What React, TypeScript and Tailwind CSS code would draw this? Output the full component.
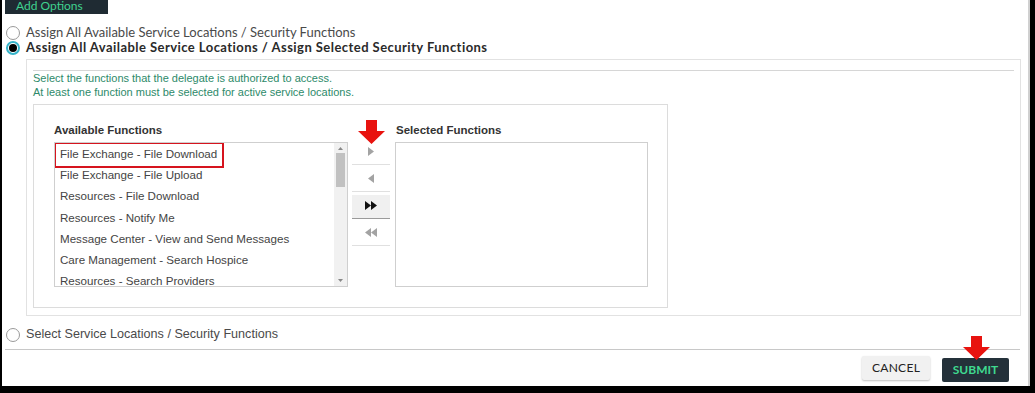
import React from 'react';

const available = [
  'File Exchange - File Download',
  'File Exchange - File Upload',
  'Resources - File Download',
  'Resources - Notify Me',
  'Message Center - View and Send Messages',
  'Care Management - Search Hospice',
  'Resources - Search Providers',
];

function Radio({ checked }: { checked?: boolean }) {
  if (checked) {
    return (
      <span className="w-[14px] h-[14px] rounded-full border-2 border-[#35b3c9] flex items-center justify-center shrink-0">
        <span className="w-[8px] h-[8px] rounded-full bg-black" />
      </span>
    );
  }
  return <span className="w-[14px] h-[14px] rounded-full border border-[#9a9a9a] bg-white shrink-0" />;
}

function RedArrow({ className }: { className: string }) {
  return (
    <svg className={className} width="27" height="24" viewBox="0 0 27 24">
      <polygon points="8,0 19,0 19,11 27,11 13.5,24 0,11 8,11" fill="#e8130f" />
    </svg>
  );
}

function Tri({ dir, color, double }: { dir: 'r' | 'l'; color: string; double?: boolean }) {
  const one = dir === 'r' ? '0,0 6,4.5 0,9' : '6,0 0,4.5 6,9';
  return (
    <svg width={double ? 12 : 6} height="9" viewBox={double ? '0 0 12 9' : '0 0 6 9'}>
      <polygon points={one} fill={color} />
      {double && <polygon points={one} fill={color} transform="translate(6,0)" />}
    </svg>
  );
}

export default function App() {
  return (
    <div className="w-[1035px] h-[393px] overflow-hidden bg-white border-l-2 border-r-[5px] border-b-[7px] border-black font-['Lato',sans-serif]">
      <div className="h-full border-r-2 border-[#d0d0d0] flex flex-col">
        {/* header button */}
        <div className="ml-[3px] w-[103px] h-[14px] bg-[#1f2b33] overflow-hidden flex items-end pb-[2px] pl-[11px]">
          <span className="text-[12px] leading-[12px] text-[#3fd28f]">Add Options</span>
        </div>

        {/* radio options */}
        <div className="mt-[11px] ml-[4px] h-[15px] flex items-center gap-[6px]">
          <Radio />
          <span className="text-[13px] leading-none text-[#4a4a4a]">Assign All Available Service Locations / Security Functions</span>
        </div>
        <div className="ml-[4px] h-[15px] flex items-center gap-[6px]">
          <Radio checked />
          <span className="text-[13px] leading-none font-bold tracking-[0.45px] text-[#2a2a2a]">Assign All Available Service Locations / Assign Selected Security Functions</span>
        </div>

        {/* function panel */}
        <div className="mt-[4px] ml-[24px] w-[995px] h-[257px] border border-[#e2e2e2] pt-[10px] px-[6px] font-['Liberation_Sans',Arial,sans-serif]">
          <div className="border-t border-[#d6d6d6]" />
          <div className="text-[11px] leading-[14px] text-[#2d8a6a]">
            <p>Select the functions that the delegate is authorized to access.</p>
            <p>At least one function must be selected for active service locations.</p>
          </div>

          <div className="mt-[5px] w-[635px] h-[204px] border border-[#dcdcdc] pt-[19px] pl-[20px] flex">
            <div className="w-[294px]">
              <div className="h-[18px] text-[11.5px] font-bold leading-[13px] text-[#333]">Available Functions</div>
              <div className="relative h-[145px] border border-[#cfcfcf] overflow-hidden">
                {available.map((f) => (
                  <div key={f} className="h-[21.2px] leading-[21.2px] pl-[5px] text-[11.6px] text-[#444] whitespace-nowrap">{f}</div>
                ))}
                <div className="absolute left-[-1px] top-[-1px] w-[170px] h-[26px] border-2 border-[#d6141e]" />
                <div className="absolute right-0 top-0 bottom-0 w-[13px] bg-[#f1f1f1] flex flex-col items-center">
                  <svg className="mt-[4px]" width="5" height="3" viewBox="0 0 5 3"><polygon points="0,3 2.5,0 5,3" fill="#888" /></svg>
                  <div className="mt-[3px] w-[9px] h-[34px] bg-[#c1c1c1]" />
                  <div className="flex-1" />
                  <svg className="mb-[4px]" width="5" height="3" viewBox="0 0 5 3"><polygon points="0,0 5,0 2.5,3" fill="#888" /></svg>
                </div>
              </div>
            </div>

            <div className="relative ml-[4px] w-[38px] pt-[14px] flex flex-col">
              <RedArrow className="absolute left-[6px] top-[-4px]" />
              <div className="h-[27px] border-b border-[#e0e0e0] flex items-center justify-center"><Tri dir="r" color="#a3a3a3" /></div>
              <div className="h-[27px] border-b border-[#e0e0e0] flex items-center justify-center"><Tri dir="l" color="#a3a3a3" /></div>
              <div className="relative h-[27px] border-b border-[#9a9a9a] flex items-end justify-center pb-[8px]">
                <div className="absolute left-0 right-0 bottom-0 h-[23px] bg-[#f0f0f0]" />
                <span className="relative"><Tri dir="r" color="#111" double /></span>
              </div>
              <div className="h-[27px] border-b border-[#e0e0e0] flex items-center justify-center"><Tri dir="l" color="#a3a3a3" double /></div>
            </div>

            <div className="ml-[5px] w-[253px]">
              <div className="h-[18px] pl-[1px] text-[11.5px] font-bold leading-[13px] text-[#333]">Selected Functions</div>
              <div className="h-[145px] border border-[#cfcfcf]" />
            </div>
          </div>
        </div>

        <div className="mt-[11px] ml-[4px] h-[15px] flex items-center gap-[6px]">
          <Radio />
          <span className="text-[12.6px] leading-none text-[#4a4a4a] font-['Liberation_Sans',Arial,sans-serif]">Select Service Locations / Security Functions</span>
        </div>
        <div className="mt-[7px] ml-[3px] w-[1015px] border-t border-[#c8c8c8]" />

        <div className="mt-[6px] mr-[19px] flex justify-end gap-[12px]">
          <button className="w-[68px] h-[24px] bg-[#f1f1f1] rounded-[2px] shadow-[0_1px_2px_rgba(0,0,0,0.25)] text-[12px] text-[#222] tracking-[0.3px]">CANCEL</button>
          <div className="relative">
            <RedArrow className="absolute left-[21px] top-[-20px] z-10" />
            <button className="w-[67px] h-[24px] bg-[#24313a] rounded-[2px] text-[12px] font-bold text-[#3fd98f]">SUBMIT</button>
          </div>
        </div>
      </div>
    </div>
  );
}
